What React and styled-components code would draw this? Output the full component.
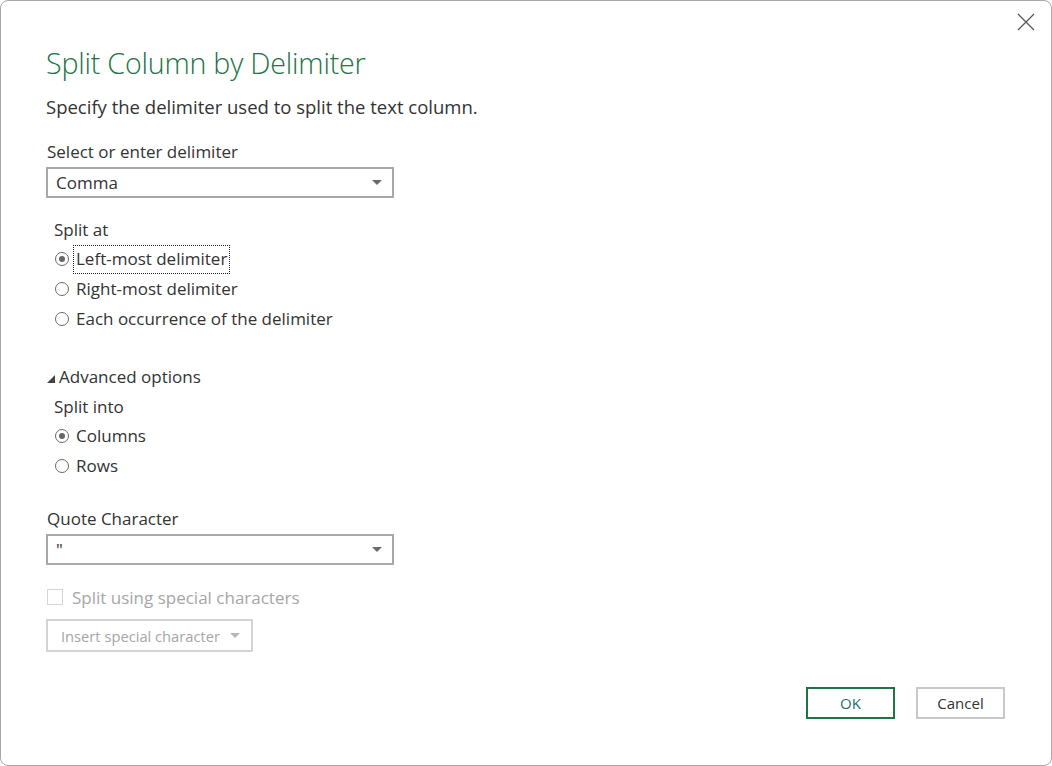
import React from 'react';
import styled, { createGlobalStyle } from 'styled-components';

const COLORS = {
  GREEN: '#217346',
  TEXT: '#333333',
  DISABLED: '#a6a6a6',
  BORDER: '#a8a8a8',
  LIGHT_BORDER: '#d4d4d4',
};

const GlobalStyle = createGlobalStyle`
  html, body {
    margin: 0;
    padding: 0;
    background: #ffffff;
  }
  body {
    font-family: "Open Sans", "Liberation Sans", sans-serif;
    color: ${COLORS.TEXT};
  }
`

const Dialog = styled.div`
  position: relative;
  box-sizing: border-box;
  width: 1052px;
  height: 766px;
  border: 1px solid ${COLORS.BORDER};
  border-radius: 8px;
  background: #fff;
  padding: 44px 46px 46px 45px;
  display: flex;
  flex-direction: column;
`
const CloseButton = styled.button`
  position: absolute;
  top: 12px;
  right: 16px;
  width: 18px;
  height: 18px;
  padding: 0;
  border: none;
  background: none;
  display: flex;
  align-items: center;
  justify-content: center;
`
const Title = styled.h1`
  margin: 0;
  font-size: 28.6px;
  font-weight: 300;
  line-height: 36px;
  color: ${COLORS.GREEN};
  letter-spacing: -0.2px;
`
const Subtitle = styled.p`
  margin: 14px 0 0;
  font-size: 18.5px;
  line-height: 24px;
`
const Label = styled.div`
  font-size: 17px;
  line-height: 22px;
  margin-top: ${p => p.$top || 0}px;
  padding-left: ${p => p.$indent ? 8 : 1}px;
`
const Select = styled.div`
  box-sizing: border-box;
  width: 348px;
  height: 31px;
  margin-top: 4px;
  border: 2px solid ${COLORS.BORDER};
  display: flex;
  align-items: center;
  justify-content: space-between;
  padding: 0 10px 0 8px;
  font-size: 17px;
`
const Caret = styled.span`
  width: 0;
  height: 0;
  border-left: 5px solid transparent;
  border-right: 5px solid transparent;
  border-top: 5px solid ${p => p.$light ? '#b8b8b8' : '#6b6b6b'};
`
const RadioGroup = styled.div`
  display: flex;
  flex-direction: column;
  margin-top: 3px;
  padding-left: 9px;
`
const RadioRow = styled.label`
  display: flex;
  align-items: center;
  height: 30px;
  font-size: 17px;
`
const RadioCircle = styled.span`
  box-sizing: border-box;
  width: 14px;
  height: 14px;
  border-radius: 50%;
  border: 1px solid #6a6a6a;
  display: flex;
  align-items: center;
  justify-content: center;
  margin-right: 6px;
  &::after {
    content: '';
    width: 6px;
    height: 6px;
    border-radius: 50%;
    background: ${p => p.$checked ? '#666' : 'transparent'};
  }
`
const RadioText = styled.span`
  padding: 1px 1px 2px;
  line-height: 22px;
  outline: ${p => p.$focused ? '1px dotted #222' : 'none'};
  outline-offset: 1px;
`
const Expander = styled.div`
  display: flex;
  align-items: center;
  margin-top: 32px;
  font-size: 17px;
  line-height: 22px;
`
const Triangle = styled.span`
  width: 0;
  height: 0;
  border-left: 8px solid transparent;
  border-bottom: 8px solid #444;
  margin: 4px 4px 0 1px;
`
const CheckRow = styled.div`
  display: flex;
  align-items: center;
  height: 22px;
  margin-top: 21px;
  font-size: 17px;
  color: ${COLORS.DISABLED};
`
const CheckBox = styled.span`
  box-sizing: border-box;
  width: 16px;
  height: 16px;
  margin: 0 9px 0 1px;
  border: 1px solid ${COLORS.LIGHT_BORDER};
`
const SpecialButton = styled.div`
  box-sizing: border-box;
  width: 207px;
  height: 33px;
  margin-top: 11px;
  border: 2px solid ${COLORS.LIGHT_BORDER};
  display: flex;
  align-items: center;
  gap: 10px;
  padding-left: 13px;
  font-size: 14.7px;
  color: ${COLORS.DISABLED};
`
const Footer = styled.div`
  margin-top: auto;
  display: flex;
  justify-content: flex-end;
  gap: 21px;
`
const Button = styled.button`
  box-sizing: border-box;
  width: 89px;
  height: 32px;
  background: #fff;
  border: 2px solid ${p => p.$primary ? COLORS.GREEN : '#c8c8c8'};
  font-family: inherit;
  font-size: 15px;
  color: ${p => p.$primary ? '#1f6f70' : COLORS.TEXT};
  padding: 0;
`

const Radio = ({ checked, focused, children }) => (
  <RadioRow>
    <RadioCircle $checked={checked} />
    <RadioText $focused={focused}>{children}</RadioText>
  </RadioRow>
)

const App = () => {
  return (
    <>
      <GlobalStyle />
      <Dialog>
        <CloseButton aria-label="Close">
          <svg width="18" height="18" viewBox="0 0 18 18">
            <path d="M1 1 L17 17 M17 1 L1 17" stroke="#555" strokeWidth="1.2" />
          </svg>
        </CloseButton>
        <Title>Split Column by Delimiter</Title>
        <Subtitle>Specify the delimiter used to split the text column.</Subtitle>

        <Label $top={22}>Select or enter delimiter</Label>
        <Select>
          <span>Comma</span>
          <Caret />
        </Select>

        <Label $top={21} $indent>Split at</Label>
        <RadioGroup>
          <Radio checked focused>Left-most delimiter</Radio>
          <Radio>Right-most delimiter</Radio>
          <Radio>Each occurrence of the delimiter</Radio>
        </RadioGroup>

        <Expander>
          <Triangle />
          Advanced options
        </Expander>
        <Label $top={8} $indent>Split into</Label>
        <RadioGroup>
          <Radio checked>Columns</Radio>
          <Radio>Rows</Radio>
        </RadioGroup>

        <Label $top={27}>Quote Character</Label>
        <Select>
          <span>"</span>
          <Caret />
        </Select>

        <CheckRow>
          <CheckBox />
          Split using special characters
        </CheckRow>
        <SpecialButton>
          Insert special character
          <Caret $light />
        </SpecialButton>

        <Footer>
          <Button $primary>OK</Button>
          <Button>Cancel</Button>
        </Footer>
      </Dialog>
    </>
  )
}

export default App
